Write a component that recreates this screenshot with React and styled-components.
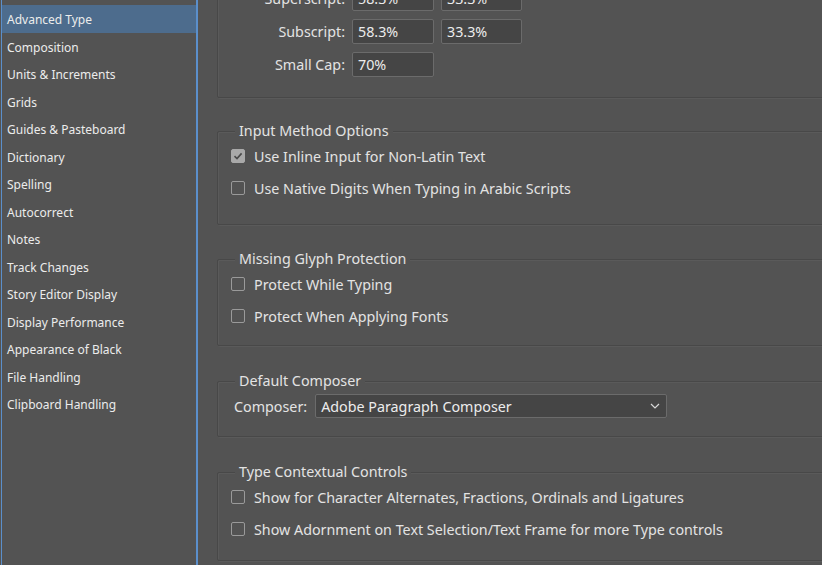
import React from "react";
import styled, { createGlobalStyle } from "styled-components";

const GlobalStyle = createGlobalStyle`
  html, body {
    margin: 0;
    padding: 0;
    background: #535353;
  }
  body {
    font-family: "Noto Sans", "Open Sans", sans-serif;
    color: #e3e3e3;
  }
`;

const sections = [
  "Advanced Type",
  "Composition",
  "Units & Increments",
  "Grids",
  "Guides & Pasteboard",
  "Dictionary",
  "Spelling",
  "Autocorrect",
  "Notes",
  "Track Changes",
  "Story Editor Display",
  "Display Performance",
  "Appearance of Black",
  "File Handling",
  "Clipboard Handling"
];

const App = () => {
  return (
    <SWindow>
      <GlobalStyle />
      <SSidebar>
        <SList>
          {sections.map((name, i) => (
            <SListItem key={name} selected={i === 0}>
              {name}
            </SListItem>
          ))}
        </SList>
      </SSidebar>

      <SMain>
        <SGroup top={-43} pt={28} pb={20}>
          <SCharGrid>
            <SLabel>Superscript:</SLabel>
            <SField>58.3%</SField>
            <SField>33.3%</SField>
            <SLabel>Subscript:</SLabel>
            <SField>58.3%</SField>
            <SField>33.3%</SField>
            <SLabel>Small Cap:</SLabel>
            <SField>70%</SField>
          </SCharGrid>
        </SGroup>

        <SGroup top={33} pt={8} pb={20}>
          <SLegend>Input Method Options</SLegend>
          <Check checked label="Use Inline Input for Non-Latin Text" />
          <Check label="Use Native Digits When Typing in Arabic Scripts" />
        </SGroup>

        <SGroup top={34} pt={8} pb={13}>
          <SLegend>Missing Glyph Protection</SLegend>
          <Check label="Protect While Typing" />
          <Check label="Protect When Applying Fonts" />
        </SGroup>

        <SGroup top={35} pt={12} pb={18}>
          <SLegend>Default Composer</SLegend>
          <SComposerRow>
            <SComposerLabel>Composer:</SComposerLabel>
            <SSelect>
              <span>Adobe Paragraph Composer</span>
              <svg width="10" height="6" viewBox="0 0 10 6">
                <path
                  d="M1 1 L5 5 L9 1"
                  fill="none"
                  stroke="#d8d8d8"
                  strokeWidth="1.2"
                />
              </svg>
            </SSelect>
          </SComposerRow>
        </SGroup>

        <SGroup top={35} pt={8} pb={15}>
          <SLegend>Type Contextual Controls</SLegend>
          <Check label="Show for Character Alternates, Fractions, Ordinals and Ligatures" />
          <Check label="Show Adornment on Text Selection/Text Frame for more Type controls" />
        </SGroup>
      </SMain>
    </SWindow>
  );
};

const Check = ({ checked, label }) => (
  <SCheckRow>
    <SBox checked={checked}>
      {checked && (
        <svg width="10" height="10" viewBox="0 0 10 10">
          <path
            d="M1.5 5.2 L4 7.6 L8.6 2.4"
            fill="none"
            stroke="#4a4a4a"
            strokeWidth="1.6"
          />
        </svg>
      )}
    </SBox>
    <span>{label}</span>
  </SCheckRow>
);

const SWindow = styled.div`
  display: flex;
  width: 822px;
  height: 565px;
  overflow: hidden;
  background: #535353;
`;

const SSidebar = styled.div`
  flex: 0 0 199px;
  display: flex;
  padding-left: 1px;
  box-sizing: border-box;
`;

const SList = styled.ul`
  flex: 1;
  margin: 0;
  padding: 5px 0 0;
  list-style: none;
  border-left: 1px solid #5b8fcb;
  border-right: 2px solid #5b8fcb;
  margin-right: 1px;
`;

const SListItem = styled.li`
  height: 27.5px;
  box-sizing: border-box;
  padding: 2px 0 0 5px;
  line-height: 26px;
  font-size: 12px;
  color: #ececec;
  white-space: nowrap;
  background: ${({ selected }) => (selected ? "#4d6c8d" : "transparent")};
`;

const SMain = styled.div`
  flex: 1;
  padding-left: 18px;
  overflow: hidden;
  font-size: 14.3px;
`;

const SGroup = styled.div`
  position: relative;
  margin-top: ${({ top }) => top}px;
  margin-right: -30px;
  padding: ${({ pt }) => pt}px 0 ${({ pb }) => pb}px 13px;
  border: 1px solid #484848;
  box-shadow: inset 1px 1px 0 #5a5a5a, 1px 1px 0 #5a5a5a;
  border-radius: 2px;
`;

const SLegend = styled.span`
  position: absolute;
  top: -11px;
  left: 17px;
  padding: 0 4px;
  background: #535353;
  line-height: 20px;
  color: #e3e3e3;
`;

const SCharGrid = styled.div`
  display: grid;
  grid-template-columns: 114px 82px 81px;
  column-gap: 7px;
  row-gap: 8px;
`;

const SLabel = styled.div`
  text-align: right;
  line-height: 25px;
  white-space: nowrap;
`;

const SField = styled.div`
  height: 25px;
  box-sizing: border-box;
  padding-left: 5px;
  background: #454545;
  border: 1px solid #6b6b6b;
  border-radius: 2px;
  line-height: 23px;
  color: #ececec;
`;

const SCheckRow = styled.label`
  display: flex;
  align-items: center;
  gap: 9px;
  height: 32px;
  color: #e3e3e3;
  white-space: nowrap;
`;

const SBox = styled.span`
  width: 14px;
  height: 14px;
  box-sizing: border-box;
  display: flex;
  align-items: center;
  justify-content: center;
  border-radius: 2px;
  border: 1px solid ${({ checked }) => (checked ? "#a9a9a9" : "#9a9a9a")};
  background: ${({ checked }) => (checked ? "#a9a9a9" : "transparent")};
`;

const SComposerRow = styled.div`
  display: flex;
  align-items: center;
  gap: 8px;
  margin-left: 3px;
`;

const SComposerLabel = styled.span`
  color: #e3e3e3;
`;

const SSelect = styled.div`
  width: 352px;
  height: 24px;
  box-sizing: border-box;
  display: flex;
  align-items: center;
  justify-content: space-between;
  padding: 0 6px 0 5px;
  background: #454545;
  border: 1px solid #6b6b6b;
  border-radius: 2px;
  color: #ececec;
`;

export default App;
